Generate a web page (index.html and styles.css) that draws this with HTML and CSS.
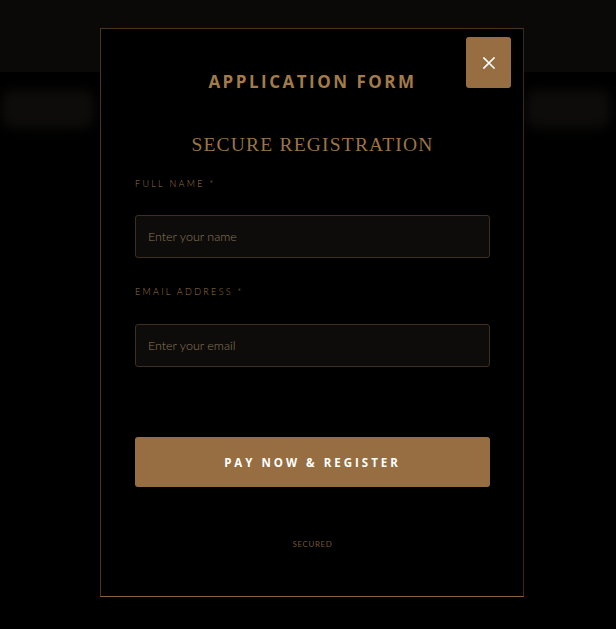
FILE: index.html
```html
<!DOCTYPE html>
<html>
<head>
<meta charset="utf-8">
<link rel="stylesheet" href="styles.css">
</head>
<body>
<div class="page">
  <div class="topbar"></div>
  <div class="hero">
    <div class="blob blob-left"></div>
    <div class="blob blob-right"></div>
  </div>
</div>
<div class="overlay">
  <div class="modal">
    <button class="close" aria-label="Close">
      <svg width="12" height="12" viewBox="0 0 12 12"><path d="M1 1L11 11M11 1L1 11" stroke="#fff" stroke-width="1.6" stroke-linecap="square"/></svg>
    </button>
    <h1 class="title">APPLICATION FORM</h1>
    <h2 class="subtitle">SECURE REGISTRATION</h2>
    <form class="form">
      <label class="label">FULL NAME *</label>
      <input class="field" type="text" placeholder="Enter your name">
      <label class="label">EMAIL ADDRESS *</label>
      <input class="field field-last" type="email" placeholder="Enter your email">
      <button type="button" class="submit">PAY NOW &amp; REGISTER</button>
    </form>
    <div class="secured">SECURED</div>
  </div>
</div>
</body>
</html>
```
FILE: styles.css
```css
html, body {
  margin: 0;
  padding: 0;
  background: #000;
  height: 100%;
  overflow: hidden;
}
.page {
  height: 100%;
}
.topbar {
  height: 72px;
  background: #0a0908;
}
.hero {
  display: flex;
  justify-content: space-between;
  margin-top: 18px;
  padding: 0 6px 0 2px;
}
.blob {
  height: 38px;
  background: #0e0c0b;
  border-radius: 10px;
  filter: blur(6px);
}
.blob-left {
  width: 92px;
}
.blob-right {
  width: 84px;
}
.overlay {
  position: fixed;
  inset: 0;
  display: flex;
  justify-content: center;
  align-items: flex-start;
  padding-top: 28px;
  padding-left: 8px;
}
.modal {
  position: relative;
  box-sizing: border-box;
  width: 424px;
  height: 569px;
  background: #000;
  border: 1px solid #4a3620;
  border-right-color: #3a2a1a;
  border-bottom-color: #8a6438;
  padding: 0 33px 0 34px;
  display: flex;
  flex-direction: column;
}
.close {
  position: absolute;
  top: 8px;
  right: 12px;
  width: 45px;
  height: 51px;
  border: none;
  border-radius: 3px;
  background: #966e41;
  display: flex;
  align-items: center;
  justify-content: center;
  padding: 0;
}
.title {
  margin: 41px 0 0;
  text-align: center;
  font-family: "Open Sans", sans-serif;
  font-weight: 700;
  font-size: 17px;
  letter-spacing: 2.5px;
  line-height: 24px;
  color: #a27b49;
}
.subtitle {
  margin: 39px 0 0;
  text-align: center;
  font-family: "Liberation Serif", serif;
  font-weight: 400;
  font-size: 19.5px;
  letter-spacing: 1.2px;
  line-height: 24px;
  color: #9a7446;
}
.form {
  display: flex;
  flex-direction: column;
  margin-top: 21px;
}
.label {
  font-family: "Lato", sans-serif;
  font-weight: 300;
  font-size: 9px;
  letter-spacing: 2.3px;
  line-height: 12px;
  color: #9a7446;
}
.field {
  box-sizing: border-box;
  margin: 25px 0 28px;
  height: 43px;
  width: 100%;
  background: #0d0c0b;
  border: 1px solid #3d2e1d;
  border-radius: 3px;
  padding: 0 12px;
  font-family: "Lato", sans-serif;
  font-size: 12.5px;
  font-weight: 300;
  color: #c9b08a;
  outline: none;
}
.field::placeholder {
  color: #8c7657;
}
.field-last {
  margin: 26px 0 0;
}
.submit {
  margin-top: 70px;
  height: 50px;
  width: 100%;
  border: none;
  border-radius: 3px;
  background: #966e41;
  color: #fff;
  font-family: "Open Sans", sans-serif;
  font-weight: 700;
  font-size: 11.5px;
  letter-spacing: 3px;
}
.secured {
  margin-top: 52px;
  text-align: center;
  font-family: "Lato", sans-serif;
  font-size: 8px;
  font-weight: 400;
  letter-spacing: 0.6px;
  color: #6e5434;
}
```
